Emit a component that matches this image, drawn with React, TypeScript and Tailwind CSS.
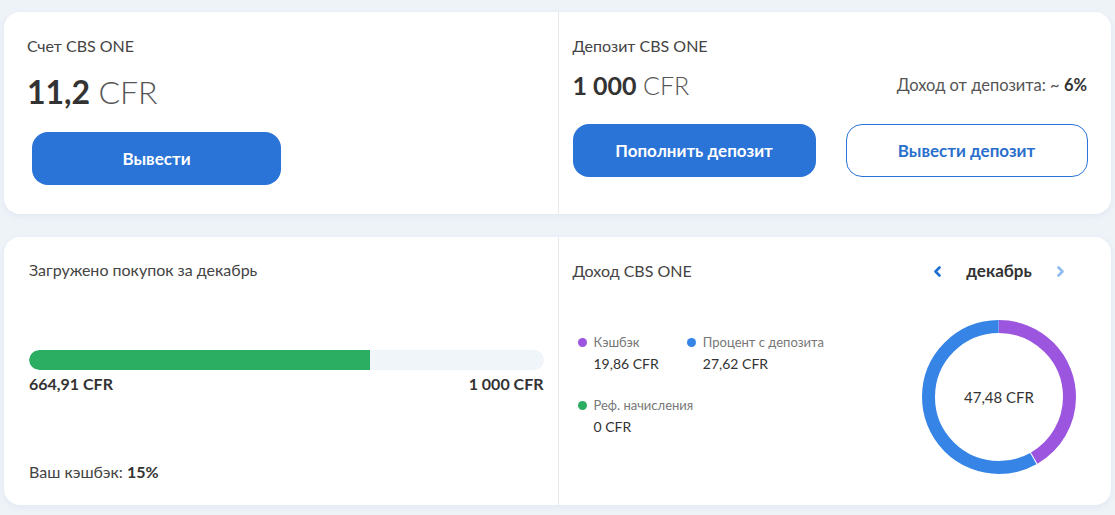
const font = { fontFamily: 'Lato, "Liberation Sans", sans-serif' }

function Chevron({ dir, color }: { dir: 'left' | 'right'; color: string }) {
  return (
    <svg width="9" height="11" viewBox="0 0 9 11" fill="none">
      <path
        d={dir === 'left' ? 'M6.5 1.5 L2.5 5.5 L6.5 9.5' : 'M2.5 1.5 L6.5 5.5 L2.5 9.5'}
        stroke={color}
        strokeWidth="2.6"
        strokeLinecap="round"
        strokeLinejoin="round"
      />
    </svg>
  )
}

function Donut() {
  const r = 70.5
  const c = 2 * Math.PI * r
  const purple = (19.86 / 47.48) * c
  const blue = c - purple
  return (
    <div className="relative w-[154px] h-[154px]">
      <svg width="154" height="154" viewBox="0 0 154 154" className="-rotate-90">
        <circle cx="77" cy="77" r={r} fill="none" stroke="#9b55de" strokeWidth="13" strokeDasharray={`${purple - 1} ${c}`} />
        <circle cx="77" cy="77" r={r} fill="none" stroke="#3584e6" strokeWidth="13" strokeDasharray={`${blue - 1} ${c}`} strokeDashoffset={-purple} />
      </svg>
      <div className="absolute inset-0 flex items-center justify-center text-[15px] text-[#333]">47,48 CFR</div>
    </div>
  )
}

function Legend({ color, label, value }: { color: string; label: string; value: string }) {
  return (
    <div>
      <div className="flex items-center gap-[7px] leading-[20px]">
        <span className="w-[9px] h-[9px] rounded-full" style={{ background: color }} />
        <span className="text-[13px] text-[#777]">{label}</span>
      </div>
      <div className="pl-[16px] mt-[2px] text-[14px] leading-[20px] text-[#333]">{value}</div>
    </div>
  )
}

export default function App() {
  return (
    <div className="w-[1115px] h-[515px] bg-[#eef3f8] px-[4px] pt-[12px]" style={font}>
      <div className="grid grid-cols-2 h-[202px] bg-white rounded-[16px] shadow-[0_2px_6px_rgba(150,170,200,0.15)]">
        <div className="pl-[23px] pt-[24px] text-[#333]">
          <div className="text-[16px] leading-[20px] text-[#444]">Счет CBS ONE</div>
          <div className="mt-[20px] text-[32px] leading-[32px]">
            <span className="font-bold">11,2</span> <span className="font-light text-[#555]">CFR</span>
          </div>
          <button className="mt-[24px] ml-[5px] w-[249px] h-[53px] rounded-[16px] bg-[#2a73d7] text-white font-bold text-[17px]">
            Вывести
          </button>
        </div>
        <div className="border-l border-[#e6e9ee] pl-[14px] pr-[15px] pt-[24px] text-[#333]">
          <div className="text-[16px] leading-[20px] text-[#444]">Депозит CBS ONE</div>
          <div className="mt-[14px] h-[30px] flex items-center justify-between pr-[9px]">
            <div className="text-[25px] leading-[30px]">
              <span className="font-bold">1 000</span> <span className="font-light text-[#555]">CFR</span>
            </div>
            <div className="text-[16.5px] text-[#555]">
              Доход от депозита: ~ <span className="font-bold text-[#333]">6%</span>
            </div>
          </div>
          <div className="mt-[24px] flex gap-[30px]">
            <button className="w-[243px] h-[53px] rounded-[16px] bg-[#2a73d7] text-white font-bold text-[17px]">
              Пополнить депозит
            </button>
            <button className="w-[242px] h-[53px] rounded-[16px] border border-[#2a73d7] text-[#2a6fcc] font-bold text-[17px]">
              Вывести депозит
            </button>
          </div>
        </div>
      </div>

      <div className="mt-[23px] grid grid-cols-2 h-[268px] bg-white rounded-[16px] shadow-[0_2px_6px_rgba(150,170,200,0.15)]">
        <div className="pl-[25px] pr-[14px] pt-[23px] flex flex-col text-[#333]">
          <div className="text-[16px] leading-[20px] text-[#444]">Загружено покупок за декабрь</div>
          <div className="mt-[70px] h-[20px] rounded-full bg-[#f0f5fa] overflow-hidden">
            <div className="h-full w-[66.3%] bg-[#2bad62] rounded-l-full" />
          </div>
          <div className="mt-[2px] flex justify-between text-[16px] leading-[24px] font-bold text-[#333]">
            <span>664,91 CFR</span>
            <span>1 000 CFR</span>
          </div>
          <div className="mt-[64px] text-[16px] leading-[24px] text-[#444]">
            Ваш кэшбэк: <span className="font-bold text-[#333]">15%</span>
          </div>
        </div>
        <div className="border-l border-[#e6e9ee] pl-[14px] pr-[35px] pt-[24px] flex text-[#333]">
          <div className="flex-1">
            <div className="text-[16px] leading-[20px] text-[#444]">Доход CBS ONE</div>
            <div className="mt-[51px] flex gap-[28px] pl-[5px]">
              <Legend color="#9b55de" label="Кэшбэк" value="19,86 CFR" />
              <Legend color="#3584e6" label="Процент с депозита" value="27,62 CFR" />
            </div>
            <div className="mt-[21px] pl-[5px]">
              <Legend color="#2bad62" label="Реф. начисления" value="0 CFR" />
            </div>
          </div>
          <div className="w-[154px] flex flex-col items-center">
            <div className="flex items-center gap-[24px] h-[20px]">
              <Chevron dir="left" color="#1f6fd0" />
              <span className="font-bold text-[17px] text-[#333]">декабрь</span>
              <Chevron dir="right" color="#8ebcf0" />
            </div>
            <div className="mt-[39px]">
              <Donut />
            </div>
          </div>
        </div>
      </div>
    </div>
  )
}
